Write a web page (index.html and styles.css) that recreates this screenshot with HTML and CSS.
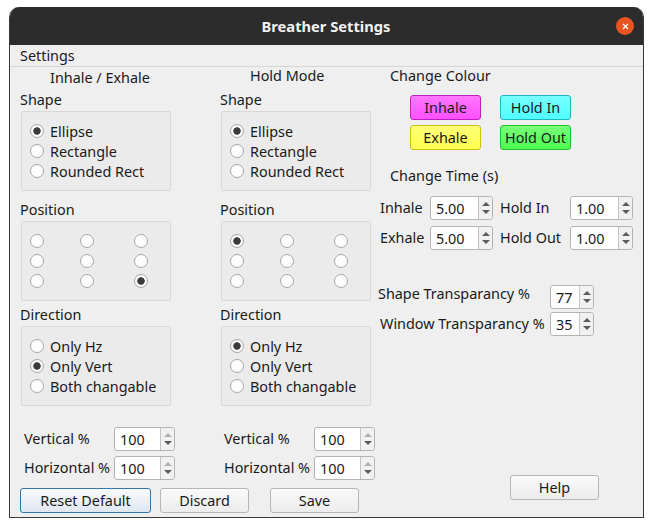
FILE: index.html
```html
<!DOCTYPE html>
<html lang="en">
<head>
  <meta charset="UTF-8" />
  <title>Breather Settings</title>
  <link rel="stylesheet" href="styles.css">
</head>
<body>

  <div class="window">
    <header class="titlebar">
      <span class="title">Breather Settings</span>
      <span class="close">
        <svg width="7" height="7" viewBox="0 0 7 7"><path d="M1 1L6 6M6 1L1 6" stroke="#fff" stroke-width="1.3"/></svg>
      </span>
    </header>
    <nav class="menubar">Settings</nav>

    <main class="content">
      <section class="mode">
        <div class="mode-title first">Inhale / Exhale</div>

        <div class="group-label">Shape</div>
        <div class="group">
          <label class="opt"><input type="radio" name="s1" checked>Ellipse</label>
          <label class="opt"><input type="radio" name="s1">Rectangle</label>
          <label class="opt"><input type="radio" name="s1">Rounded Rect</label>
        </div>

        <div class="group-label pos-label">Position</div>
        <div class="group pos">
          <input type="radio" name="p1"><input type="radio" name="p1"><input type="radio" name="p1">
          <input type="radio" name="p1"><input type="radio" name="p1"><input type="radio" name="p1">
          <input type="radio" name="p1"><input type="radio" name="p1"><input type="radio" name="p1" checked>
        </div>

        <div class="group-label dir-label">Direction</div>
        <div class="group">
          <label class="opt"><input type="radio" name="d1">Only Hz</label>
          <label class="opt"><input type="radio" name="d1" checked>Only Vert</label>
          <label class="opt"><input type="radio" name="d1">Both changable</label>
        </div>

        <div class="size-row first-size">
          <span class="size-label">Vertical %</span>
          <div class="spin w61"><span class="val">100</span><span class="arrows"><i class="up off"></i><i class="down"></i></span></div>
        </div>
        <div class="size-row">
          <span class="size-label">Horizontal %</span>
          <div class="spin w61"><span class="val">100</span><span class="arrows"><i class="up off"></i><i class="down"></i></span></div>
        </div>
      </section>

      <section class="mode">
        <div class="mode-title">Hold Mode</div>

        <div class="group-label">Shape</div>
        <div class="group">
          <label class="opt"><input type="radio" name="s2" checked>Ellipse</label>
          <label class="opt"><input type="radio" name="s2">Rectangle</label>
          <label class="opt"><input type="radio" name="s2">Rounded Rect</label>
        </div>

        <div class="group-label pos-label">Position</div>
        <div class="group pos">
          <input type="radio" name="p2" checked><input type="radio" name="p2"><input type="radio" name="p2">
          <input type="radio" name="p2"><input type="radio" name="p2"><input type="radio" name="p2">
          <input type="radio" name="p2"><input type="radio" name="p2"><input type="radio" name="p2">
        </div>

        <div class="group-label dir-label">Direction</div>
        <div class="group">
          <label class="opt"><input type="radio" name="d2" checked>Only Hz</label>
          <label class="opt"><input type="radio" name="d2">Only Vert</label>
          <label class="opt"><input type="radio" name="d2">Both changable</label>
        </div>

        <div class="size-row first-size">
          <span class="size-label">Vertical %</span>
          <div class="spin w61"><span class="val">100</span><span class="arrows"><i class="up off"></i><i class="down"></i></span></div>
        </div>
        <div class="size-row">
          <span class="size-label">Horizontal %</span>
          <div class="spin w61"><span class="val">100</span><span class="arrows"><i class="up off"></i><i class="down"></i></span></div>
        </div>
      </section>

      <section class="side">
        <div class="side-title colour-title">Change Colour</div>
        <div class="colours">
          <button class="swatch pink">Inhale</button>
          <button class="swatch cyan">Hold In</button>
          <button class="swatch yellow">Exhale</button>
          <button class="swatch green">Hold Out</button>
        </div>

        <div class="side-title time-title">Change Time (s)</div>
        <div class="times">
          <span>Inhale</span>
          <div class="spin w63"><span class="val">5.00</span><span class="arrows"><i class="up"></i><i class="down"></i></span></div>
          <span class="hold">Hold In</span>
          <div class="spin w63"><span class="val">1.00</span><span class="arrows"><i class="up"></i><i class="down"></i></span></div>
          <span>Exhale</span>
          <div class="spin w63"><span class="val">5.00</span><span class="arrows"><i class="up"></i><i class="down"></i></span></div>
          <span class="hold">Hold Out</span>
          <div class="spin w63"><span class="val">1.00</span><span class="arrows"><i class="up"></i><i class="down"></i></span></div>
        </div>

        <div class="trans">
          <div class="trans-row first">
            <span>Shape Transparancy %</span>
            <div class="spin w44"><span class="val">77</span><span class="arrows"><i class="up"></i><i class="down"></i></span></div>
          </div>
          <div class="trans-row second">
            <span>Window Transparancy %</span>
            <div class="spin w44"><span class="val">35</span><span class="arrows"><i class="up"></i><i class="down"></i></span></div>
          </div>
        </div>

        <button class="btn help">Help</button>
      </section>

      <footer class="actions">
        <button class="btn reset">Reset Default</button>
        <button class="btn discard">Discard</button>
        <button class="btn save">Save</button>
      </footer>
    </main>
  </div>

</body>
</html>
```

FILE: styles.css
```css
* {
  box-sizing: border-box;
}

body {
  margin: 0;
  background: white;
  font-family: "Noto Sans", sans-serif;
  font-size: 14.4px;
  color: #1a1a1a;
}

button {
  font: inherit;
  color: inherit;
  padding: 0 0 1px;
  cursor: pointer;
}

.window {
  width: 635px;
  height: 511px;
  margin: 7px 0 0 9px;
  background: #efefef;
  border: 1px solid #3a3a3a;
  border-top: none;
  border-radius: 10px 10px 0 0;
  overflow: hidden;
}

.titlebar {
  height: 38px;
  margin: 0 -1px;
  background: #2c2c2c;
  color: #f2f2f2;
  display: flex;
  align-items: center;
  justify-content: center;
  position: relative;
}

.title {
  font-weight: 700;
  font-size: 14.7px;
  margin-left: -1px;
}

.close {
  position: absolute;
  right: 10px;
  top: 10px;
  width: 18px;
  height: 18px;
  border-radius: 50%;
  background: #e95420;
  display: flex;
  align-items: center;
  justify-content: center;
}

.menubar {
  height: 22px;
  padding-left: 10px;
  line-height: 21px;
  border-bottom: 1px solid #d6d6d6;
}

.content {
  display: grid;
  grid-template-columns: 200px 140px 1fr;
  grid-template-rows: 421px auto;
  padding-left: 10px;
  height: 451px;
}

.mode {
  display: flex;
  flex-direction: column;
  align-items: flex-start;
}

.mode-title {
  height: 20px;
  line-height: 20px;
  margin-left: 30px;
  margin-top: -1px;
}

.mode-title.first {
  line-height: 19px;
  margin-top: 1px;
  margin-bottom: -2px;
}

.group-label {
  height: 20px;
  line-height: 19px;
  margin-top: 4px;
}

.pos-label {
  margin-top: 9px;
}

.dir-label {
  margin-top: 4px;
}

.group {
  width: 150px;
  height: 80px;
  margin: 1px 0 0 1px;
  padding: 9px 0 0 8px;
  background: #ebebeb;
  border: 1px solid #d8d8d8;
  border-radius: 2px;
}

.opt {
  display: flex;
  align-items: center;
  gap: 6px;
  height: 20px;
  white-space: nowrap;
}

input[type="radio"] {
  appearance: none;
  width: 14px;
  height: 14px;
  margin: 0;
  background: #fdfdfd;
  border: 1px solid #a8a8a8;
  border-radius: 50%;
  flex: none;
  display: block;
}

input[type="radio"]:checked {
  background: radial-gradient(circle, #3b3b3b 0 3.4px, #fbfbfb 4px);
}

.pos {
  display: grid;
  grid-template-columns: 50px 54px 14px;
  grid-auto-rows: 20px;
  align-items: center;
}

.size-row {
  display: flex;
  align-items: center;
  height: 24px;
  margin-top: 5px;
  margin-left: 4px;
}

.first-size {
  margin-top: 21px;
}

.size-label {
  width: 90px;
  white-space: nowrap;
  padding-bottom: 2px;
}

.spin {
  height: 24px;
  display: flex;
  align-items: center;
  background: white;
  border: 1px solid #b4b4b4;
  border-radius: 3px;
  flex: none;
}

.w61 { width: 61px; }
.w63 { width: 63px; }
.w44 { width: 44px; }

.val {
  flex: 1;
  padding: 2px 0 0 5px;
  line-height: 20px;
}

.arrows {
  width: 14px;
  height: 22px;
  background: #f1f1f1;
  border-left: 1px solid #c4c4c4;
  border-radius: 0 3px 3px 0;
  display: flex;
  flex-direction: column;
  align-items: center;
  justify-content: center;
  gap: 4px;
}

.up, .down {
  width: 0;
  height: 0;
  border-left: 4px solid transparent;
  border-right: 4px solid transparent;
}

.up {
  border-bottom: 4px solid #5c5c5c;
}

.up.off {
  border-bottom-color: #b2b2b2;
}

.down {
  border-top: 4px solid #5c5c5c;
}

.side {
  grid-column: 3;
  grid-row: 1 / 3;
}

.side-title {
  height: 20px;
  line-height: 19px;
  margin-left: 30px;
}

.colour-title {
  margin-top: -1px;
}

.colours {
  display: grid;
  grid-template-columns: 71px 71px;
  grid-auto-rows: 25px;
  column-gap: 19px;
  row-gap: 5px;
  margin: 9px 0 0 50px;
}

.swatch {
  border-radius: 3px;
  border: 1px solid;
}

.pink {
  background: linear-gradient(#ff78ff, #ff50ff);
  border-color: #c020c0;
}

.cyan {
  background: linear-gradient(#78ffff, #50ffff);
  border-color: #20b8c0;
}

.yellow {
  background: linear-gradient(#ffff78, #ffff50);
  border-color: #c8c010;
}

.green {
  background: linear-gradient(#78ff78, #50f850);
  border-color: #20c030;
}

.time-title {
  margin-top: 16px;
}

.times {
  display: grid;
  grid-template-columns: 50px 63px 77px 63px;
  grid-auto-rows: 24px;
  row-gap: 6px;
  align-items: center;
  margin: 10px 0 0 20px;
}

.times > span {
  padding-bottom: 2px;
}

.hold {
  padding-left: 7px;
}

.trans {
  margin: 35px 0 0 18px;
}

.trans-row {
  display: flex;
  align-items: center;
  height: 24px;
  width: 216px;
  justify-content: space-between;
}

.trans-row > span {
  white-space: nowrap;
  padding-bottom: 2px;
}

.trans-row.first > span {
  padding-bottom: 8px;
}

.trans-row.second {
  margin-top: 3px;
  padding-left: 2px;
}

.btn {
  height: 25px;
  width: 89px;
  background: linear-gradient(#fafafa, #ececec);
  border: 1px solid #b6b6b6;
  border-radius: 3px;
}

.help {
  margin: 139px 0 0 150px;
}

.actions {
  grid-column: 1 / 3;
  grid-row: 2;
  display: flex;
  align-items: flex-start;
}

.reset {
  width: 131px;
  background: linear-gradient(#f8fafc, #dfe7ef);
  border-color: #2f77ad;
}

.discard {
  margin-left: 9px;
}

.save {
  margin-left: 21px;
}
```
